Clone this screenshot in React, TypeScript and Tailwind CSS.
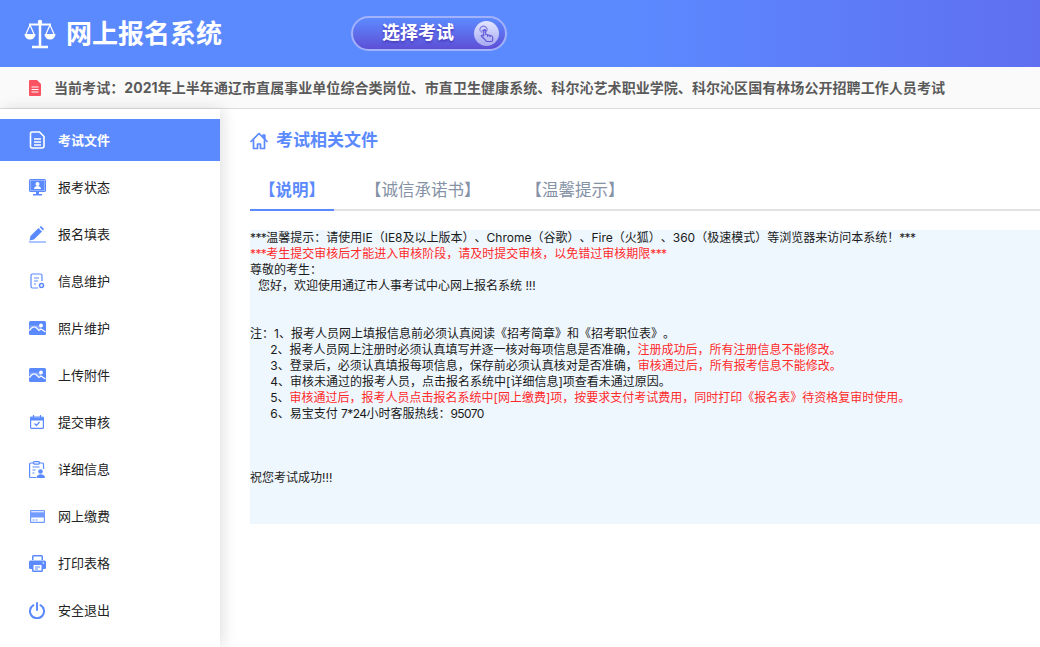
import React from "react";

const font = "font-['Inter','Noto_Sans_CJK_SC',sans-serif]";

function DocIcon() {
  return (
    <svg width="17" height="18" viewBox="0 0 17 18" fill="none" stroke="currentColor" strokeWidth="1.6">
      <path d="M3 1h7.5L15 5.500V15a2 2 0 0 1-2 2H3a1.500 1.500 0 0 1-1.500-1.500v-13A1.500 1.500 0 0 1 3 1z" />
      <path d="M5 8h7M5 11h7M5 14h7" />
    </svg>
  );
}

function MonitorIcon() {
  return (
    <svg width="17" height="17" viewBox="0 0 17 17" fill="currentColor">
      <rect x="0" y="0" width="17" height="13" rx="1.500" />
      <rect x="1.200" y="1.200" width="14.600" height="10.600" fill="#5b8aff" stroke="#dfe8ff" strokeWidth="0.400" />
      <circle cx="8.500" cy="5" r="2" fill="#fff" />
      <path d="M5 10c0-4 7-4 7 0z" fill="#fff" />
      <rect x="7" y="13" width="3" height="2" />
      <rect x="4" y="15" width="9" height="1.500" />
    </svg>
  );
}

function PenIcon() {
  return (
    <svg width="17" height="17" viewBox="0 0 17 17" fill="currentColor">
      <path d="M0.500 14.500 1.500 10 9.500 2l3.500 3.500-8 8z" />
      <path d="M10.500 1 12 0l3 3-1 1.500z" />
      <rect x="0" y="15.500" width="17" height="1" />
    </svg>
  );
}

function InfoIcon() {
  return (
    <svg width="15" height="16" viewBox="0 0 15 16" fill="none" stroke="currentColor" strokeWidth="1.200">
      <path d="M8 15H2.500A1.500 1.500 0 0 1 1 13.500v-11A1.500 1.500 0 0 1 2.500 1h8A1.500 1.500 0 0 1 12 2.500V8" />
      <path d="M4 5h5M4 8h4M4 11h2" />
      <circle cx="11.500" cy="12.500" r="2" strokeWidth="1.500" />
    </svg>
  );
}

function PhotoIcon() {
  return (
    <svg width="17" height="14" viewBox="0 0 17 14" fill="currentColor">
      <rect x="0" y="0" width="17" height="14" rx="1.500" />
      <path d="M0.500 9.500C3 6 5 5 7 6.500L10 9.500 12 8l4.500 3" fill="none" stroke="#fff" strokeWidth="1.300" />
      <path d="M0.500 9.500C3 6 5 5 7 6.500L10 9.500 12 8V4.500H0.500z" fill="#c9d8ff" fillOpacity="0.350" />
      <circle cx="12" cy="4.500" r="1.900" fill="#fff" />
    </svg>
  );
}

function CalendarIcon() {
  return (
    <svg width="14" height="14" viewBox="0 0 14 14" fill="none" stroke="currentColor" strokeWidth="1.200">
      <rect x="0.600" y="2" width="12.800" height="11.400" rx="1" />
      <path d="M0.600 3h12.800v2H0.600z" fill="currentColor" />
      <path d="M3.500 0v3M10.500 0v3" />
      <path d="M4.500 8.500 6.500 10.500 9.500 7" />
    </svg>
  );
}

function DetailIcon() {
  return (
    <svg width="16" height="17" viewBox="0 0 16 17" fill="none" stroke="currentColor" strokeWidth="1.200">
      <path d="M4 2H1.500A1 1 0 0 0 .6 3v12.500a1 1 0 0 0 1 1H7M11 2h2.500a1 1 0 0 1 1 1v5" />
      <rect x="4.500" y="0.600" width="6" height="2.500" rx="1" />
      <path d="M3.500 6h7M3.500 9h3M3.500 12h2" />
      <circle cx="11.500" cy="10.500" r="2.300" fill="currentColor" stroke="none" />
      <path d="M7.500 17c0-5 8.500-5 8.500 0z" fill="currentColor" stroke="none" />
    </svg>
  );
}

function CardIcon() {
  return (
    <svg width="15" height="13" viewBox="0 0 15 13" fill="currentColor" fillOpacity="0.850">
      <path fillRule="evenodd" d="M1 0h13a1 1 0 0 1 1 1v11a1 1 0 0 1-1 1H1a1 1 0 0 1-1-1V1a1 1 0 0 1 1-1zM1.200 7.500v4.300h12.600V7.500zM1.200 1.200v1h12.600v-1z" />
      <rect x="2.500" y="9.500" width="2" height="1" />
      <rect x="5.500" y="9.500" width="2" height="1" />
    </svg>
  );
}

function PrintIcon() {
  return (
    <svg width="17" height="17" viewBox="0 0 17 17" fill="currentColor">
      <path fillRule="evenodd" d="M4.500 0h8A1.500 1.500 0 0 1 14 1.500V5h-1.500V1.500h-8V5H3V1.500A1.500 1.500 0 0 1 4.500 0z" />
      <path fillRule="evenodd" d="M1.500 5.500h14A1.500 1.500 0 0 1 17 7v6a1 1 0 0 1-1 1h-2v1.500a1.500 1.500 0 0 1-1.500 1.500h-8A1.500 1.500 0 0 1 3 15.500V14H1a1 1 0 0 1-1-1V7a1.500 1.500 0 0 1 1.500-1.500zM4.500 10v5.500h8V10z" />
      <rect x="6" y="11.500" width="5" height="1" />
      <rect x="6" y="13.500" width="3" height="1" />
      <circle cx="14.300" cy="8" r="0.800" fill="#fff" />
    </svg>
  );
}

function PowerIcon() {
  return (
    <svg width="16" height="17" viewBox="0 0 16 17" fill="none" stroke="currentColor" strokeWidth="2" strokeLinecap="round">
      <path d="M8 1v7" />
      <path d="M4.500 3.200a7 7 0 1 0 7 0" />
    </svg>
  );
}

function ScaleLogo() {
  return (
    <svg width="32" height="30" viewBox="0 0 32 30" fill="none" stroke="#fff" strokeWidth="2">
      <path d="M16 2v25" strokeWidth="2.500" />
      <path d="M8 28h16" strokeWidth="2.500" />
      <path d="M5 5.500h22" />
      <circle cx="16" cy="3" r="2.200" fill="#fff" stroke="none" />
      <path d="M6 6 2 15M6 6l4 9M26 6l-4 9M26 6l4 9" strokeWidth="1.200" />
      <path d="M.5 15h11a5.500 5.500 0 0 1-11 0zM20.500 15h11a5.500 5.500 0 0 1-11 0z" fill="#fff" stroke="none" />
    </svg>
  );
}

function HandBadge() {
  return (
    <span className="flex h-[25px] w-[25px] items-center justify-center rounded-full bg-gradient-to-b from-[#e3e6ff] to-[#a7aaf0]">
      <svg width="17" height="18" viewBox="0 0 17 18" fill="none" stroke="#5b52d8" strokeWidth="1.100" strokeLinejoin="round">
        <path d="M2.500 6.500a3.500 3.500 0 1 1 6 0" strokeOpacity="0.700" />
        <path d="M4 8a1.800 1.800 0 1 1 3 0" strokeOpacity="0.700" />
        <path d="M7 14.500 3.500 11.500c-.8-.8.3-2 1.300-1.300l.9.800V5.500a1 1 0 0 1 2 0v4l5 1c1 .2 2 1 2 2.200v2c0 1-.7 1.800-1.800 1.800H9c-.8 0-1.500-.8-2-2z" />
        <path d="M9.700 9.700v2.300M12 10.200v2" />
      </svg>
    </span>
  );
}

function HomeIcon() {
  return (
    <svg width="18" height="18" viewBox="0 0 18 18" fill="none" stroke="#5b8aff" strokeWidth="1.700" strokeLinejoin="round" strokeLinecap="round">
      <path d="M1 9.500 9 1.500l8 8" />
      <path d="M13 5.500V3h1.800v4.500" />
      <path d="M3.500 8v8.500h4V12h3v4.500h4V8" />
    </svg>
  );
}

function DocRed() {
  return (
    <svg width="12" height="16" viewBox="0 0 12 16" fill="#fb5261">
      <path fillRule="evenodd" d="M1 0h7l4 4v11a1 1 0 0 1-1 1H1a1 1 0 0 1-1-1V1a1 1 0 0 1 1-1zM2.500 6.500v1h7v-1zM2.500 9v1h7V9zM2.500 11.500v1h7v-1z" />
    </svg>
  );
}

const menu = [
  { label: "考试文件", icon: <DocIcon />, active: true },
  { label: "报考状态", icon: <MonitorIcon /> },
  { label: "报名填表", icon: <PenIcon /> },
  { label: "信息维护", icon: <InfoIcon /> },
  { label: "照片维护", icon: <PhotoIcon /> },
  { label: "上传附件", icon: <PhotoIcon /> },
  { label: "提交审核", icon: <CalendarIcon /> },
  { label: "详细信息", icon: <DetailIcon /> },
  { label: "网上缴费", icon: <CardIcon /> },
  { label: "打印表格", icon: <PrintIcon /> },
  { label: "安全退出", icon: <PowerIcon /> },
];

function Red({ children }: { children: React.ReactNode }) {
  return <span className="text-[#ff2a2a]">{children}</span>;
}

// Latin runs sit a little tighter than Inter's default
function Tight({ children }: { children: React.ReactNode }) {
  return <span className="tracking-[-0.6px]">{children}</span>;
}

export default function App() {
  return (
    <div className={`flex h-[647px] w-[1040px] flex-col overflow-hidden bg-white [text-spacing-trim:space-all] ${font}`}>
      {/* Header */}
      <header className="flex h-[67px] shrink-0 items-center bg-gradient-to-r from-[#5b8aff] from-60% to-[#5f6ff0]">
        <div className="ml-[24px]">
          <ScaleLogo />
        </div>
        <h1 className="ml-[10px] w-[285px] text-[26px] leading-none font-bold text-white">网上报名系统</h1>
        <button className="flex h-[35px] w-[156px] items-center rounded-full border-2 border-[#a3b1fa] bg-gradient-to-b from-[#5b8aff] to-[#5d4fd6] pl-[29px] text-[18px] leading-none font-bold text-white [text-shadow:0_2px_2px_#4b3fc0]">
          <span className="-mt-[2px]">选择考试</span>
          <span className="mr-[6px] ml-auto">
            <HandBadge />
          </span>
        </button>
      </header>

      {/* Current exam notice */}
      <div className="flex h-[42px] shrink-0 items-center border-b border-[#dddddd] bg-[#fafafa] pl-[29px]">
        <DocRed />
        <p className="ml-[13px] text-[14px] font-bold tracking-[0.06px] whitespace-nowrap text-[#5a5a5a]">
          当前考试：2021年上半年通辽市直属事业单位综合类岗位、市直卫生健康系统、科尔沁艺术职业学院、科尔沁区国有林场公开招聘工作人员考试
        </p>
      </div>

      <div className="flex min-h-0 flex-1">
        {/* Sidebar */}
        <aside className="flex w-[220px] shrink-0 flex-col gap-[5px] pt-[10px] shadow-[3px_0_14px_rgba(0,0,0,0.12)]">
          {menu.map((item) => (
            <div
              key={item.label}
              className={`flex h-[42px] shrink-0 items-center text-[13px] ${
                item.active ? "bg-[#5b8aff] font-bold text-white" : "text-[#222222]"
              }`}
            >
              <span className={`flex w-[58px] justify-center pr-[2px] pl-[18px] ${item.active ? "text-white" : "text-[#5b8aff]"}`}>
                {item.icon}
              </span>
              <span className="pt-[2px]">{item.label}</span>
            </div>
          ))}
        </aside>

        {/* Main */}
        <main className="min-w-0 flex-1 pt-[20px] pl-[30px]">
          <div className="flex h-[24px] items-center gap-[8px]">
            <HomeIcon />
            <h2 className="text-[17px] font-bold text-[#5b8aff]">考试相关文件</h2>
          </div>

          <div className="mt-[15px] flex h-[43px] border-b-2 border-[#e2e2e2] text-[16.5px]">
            <div className="-mb-[2px] border-b-2 border-[#5b8aff] px-[9px] pt-[10px] font-bold text-[#5b8aff]">【说明】</div>
            <div className="ml-[21px] px-[10px] pt-[10px] text-[#8592a6]">【诚信承诺书】</div>
            <div className="ml-[25px] px-[10px] pt-[10px] text-[#8592a6]">【温馨提示】</div>
          </div>

          <div className="mt-[19px] h-[294px] bg-[#eff7fe] text-[12px] leading-[16px] whitespace-pre text-[#1a1a1a]">
            <Tight>***</Tight>
            {"温馨提示：请使用IE（IE8及以上版本）、Chrome（谷歌）、Fire（火狐）、360（极速模式）等浏览器来访问本系统！"}
            <Tight>***</Tight>
            {"\n"}
            <Red>
              <Tight>***</Tight>考生提交审核后才能进入审核阶段，请及时提交审核，以免错过审核期限<Tight>***</Tight>
            </Red>
            {"\n尊敬的考生：\n\u2004\u2004您好，欢迎使用通辽市人事考试中心网上报名系统 !!!\n\n\n注：1、报考人员网上填报信息前必须认真阅读《招考简章》和《招考职位表》。\n      2、报考人员网上注册时必须认真填写并逐一核对每项信息是否准确，"}
            <Red>注册成功后，所有注册信息不能修改。</Red>
            {"\n      3、登录后，必须认真填报每项信息，保存前必须认真核对是否准确，"}
            <Red>审核通过后，所有报考信息不能修改。</Red>
            {"\n      4、审核未通过的报考人员，点击报名系统中[详细信息]项查看未通过原因。\n      5、"}
            <Red>审核通过后，报考人员点击报名系统中[网上缴费]项，按要求支付考试费用，同时打印《报名表》待资格复审时使用。</Red>
            {"\n      6、易宝支付 "}
            <Tight>7*24</Tight>
            {"小时客服热线："}
            <Tight>95070</Tight>
            {"\n\n\n\n祝您考试成功!!!"}
          </div>
        </main>
      </div>
    </div>
  );
}
